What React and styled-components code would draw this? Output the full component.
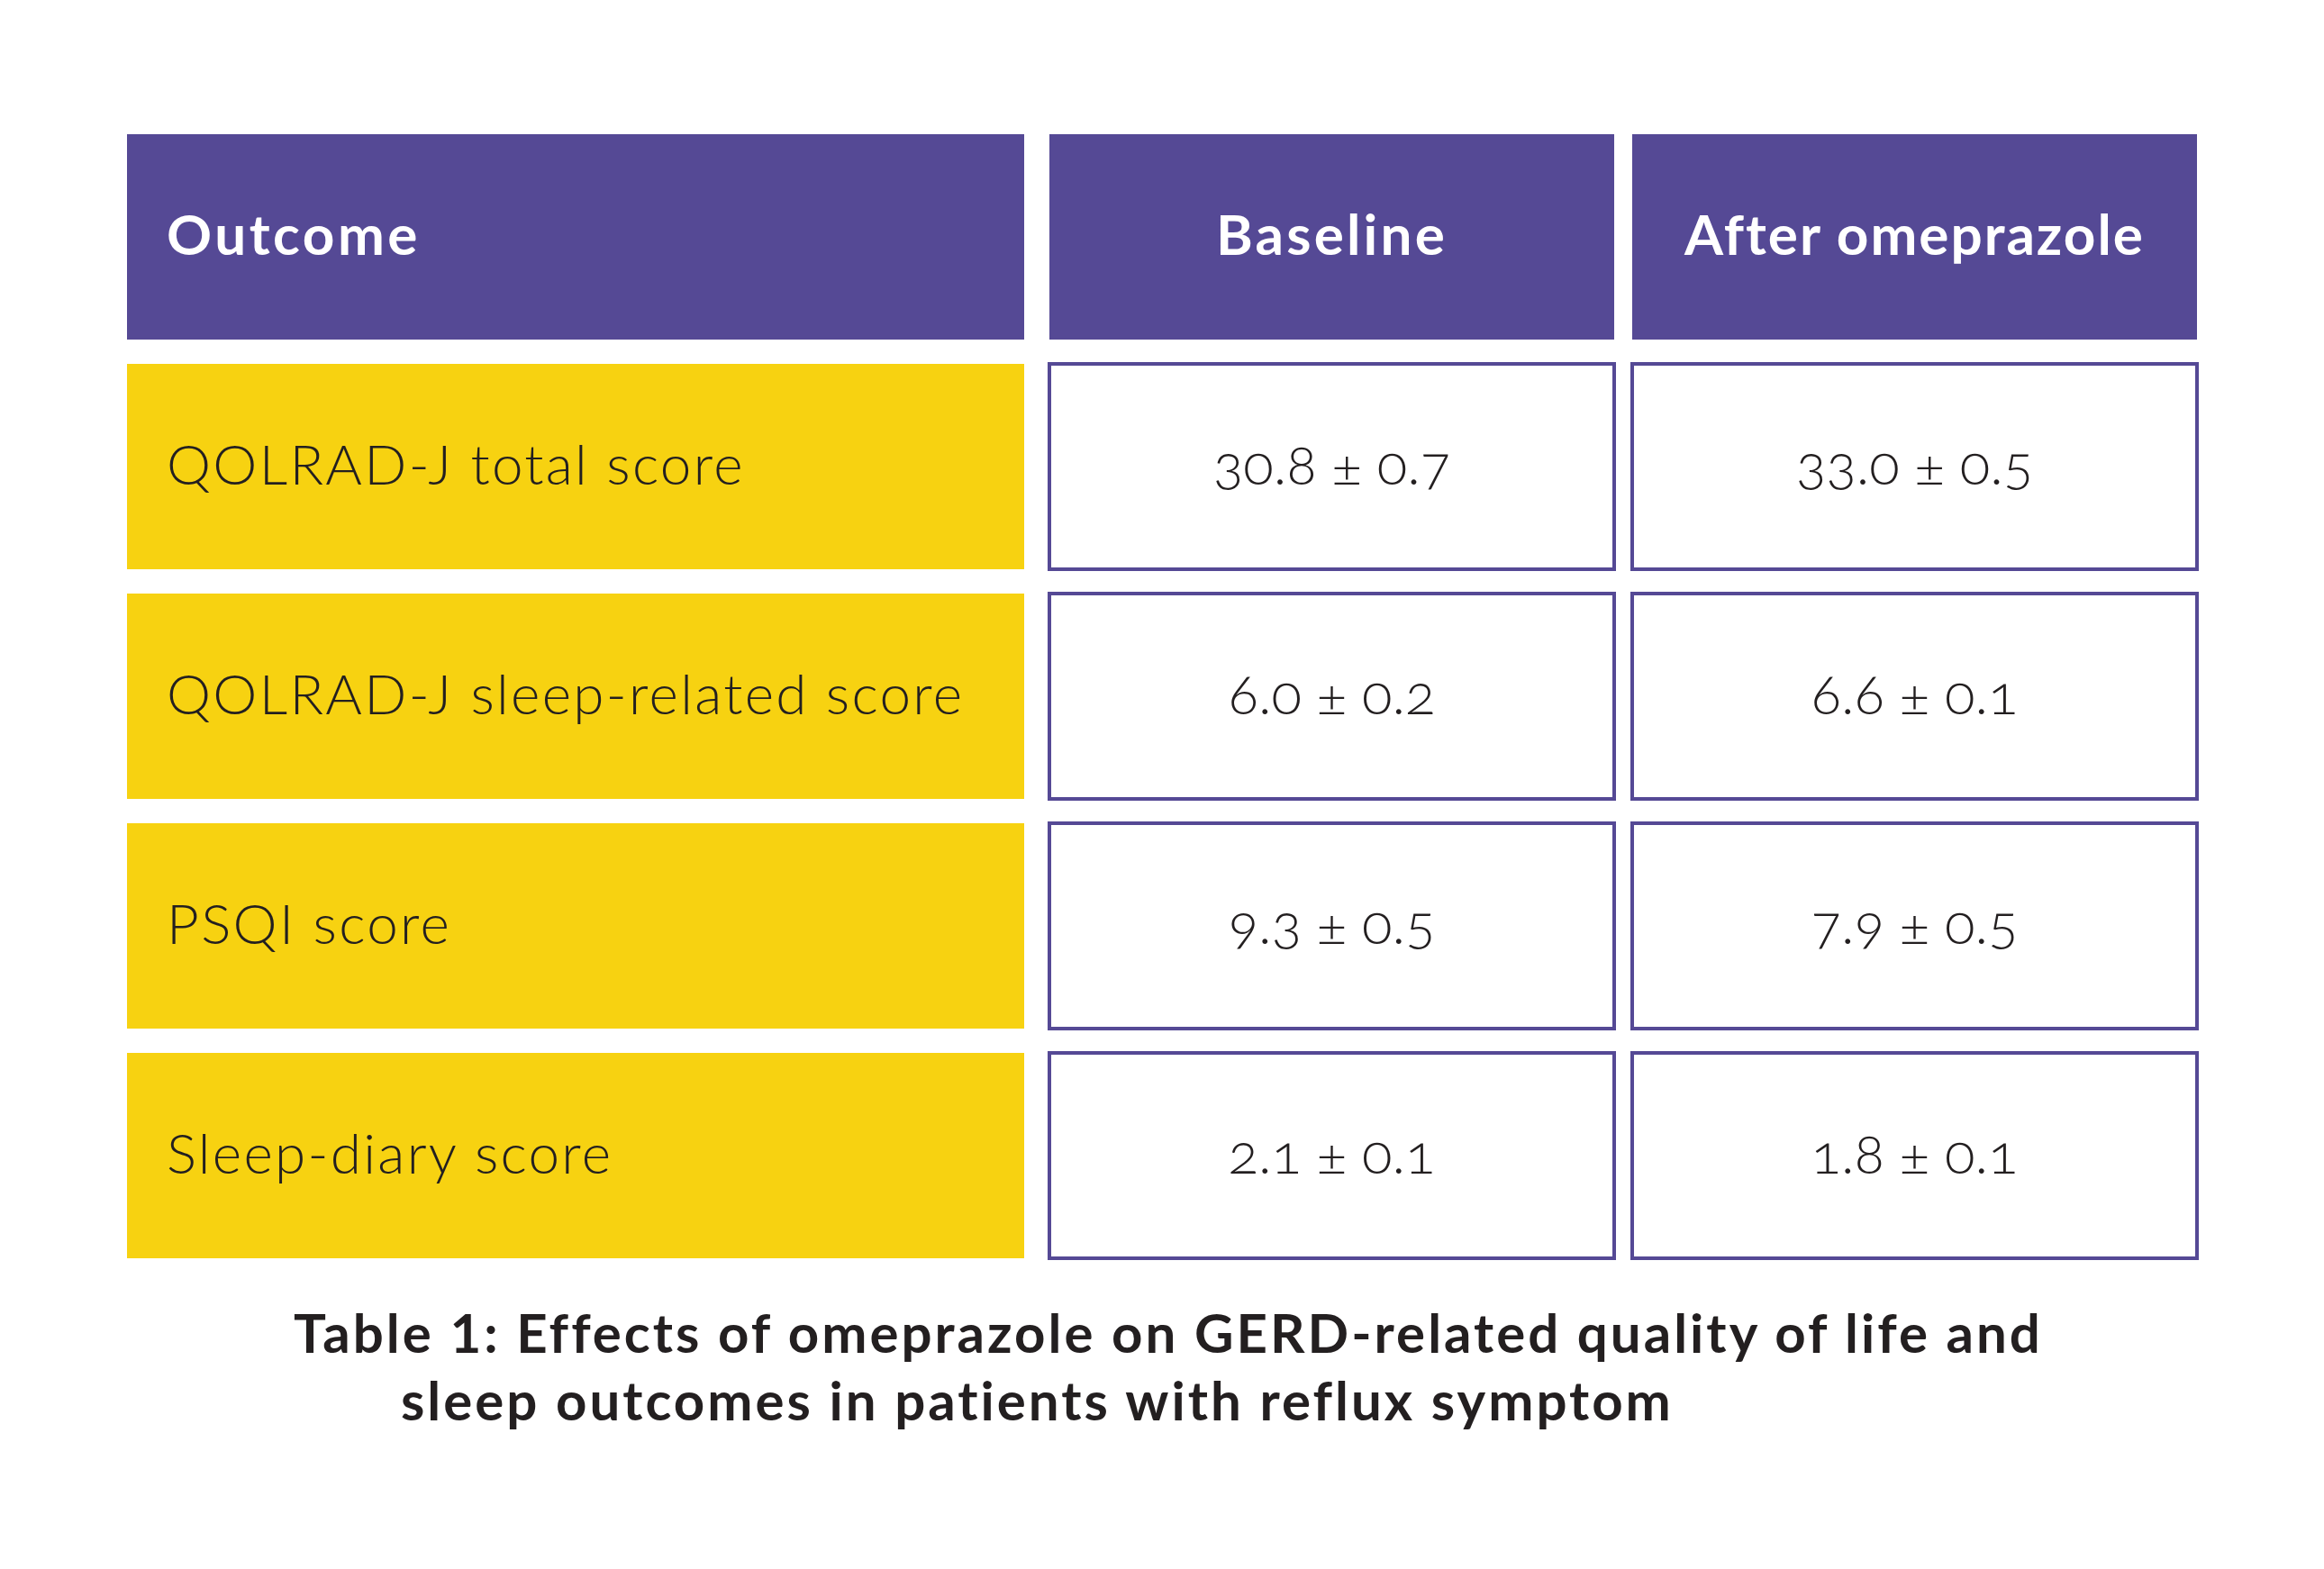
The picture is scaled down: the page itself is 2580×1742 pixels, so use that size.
import React from "react";
import styled, { createGlobalStyle } from "styled-components";

const Global = createGlobalStyle`
  html, body { margin: 0; padding: 0; background: #ffffff; }
  body { font-family: Lato, "Noto Sans", sans-serif; color: #231f20; }
`;

const Page = styled.div`
  width: 2580px;
  height: 1742px;
  box-sizing: border-box;
  padding: 149px 0 0 141px;
  background: #ffffff;
`;

const Table = styled.div`
  display: flex;
  flex-direction: column;
  gap: 27px;
  width: 2298px;
`;

const Row = styled.div`
  display: flex;
  gap: 20px;
  height: 228px;
`;

const Cell = styled.div`
  box-sizing: border-box;
  display: flex;
  align-items: center;
  padding-bottom: 8px;
  font-size: 62px;
  line-height: 1.2;
  white-space: nowrap;
`;

const LabelCell = styled(Cell)`
  width: 996px;
  margin-right: 8px;
  padding-left: 44px;
  justify-content: flex-start;
  background: ${(p) => (p.$head ? "#554995" : "#f7d211")};
  color: ${(p) => (p.$head ? "#ffffff" : "#231f20")};
  font-weight: ${(p) => (p.$head ? 700 : 300)};
  letter-spacing: ${(p) => (p.$head ? "3.5px" : "2.3px")};
`;

const HeadCell = styled(Cell)`
  width: 627px;
  justify-content: center;
  background: #554995;
  color: #ffffff;
  font-weight: 700;
  letter-spacing: ${(p) => p.$spacing}px;
`;

const ValueCell = styled(Cell)`
  width: 627px;
  justify-content: center;
  background: #ffffff;
  outline: 4px solid #554995;
  outline-offset: -2px;
  color: #231f20;
  font-weight: 300;
  font-feature-settings: "onum" 1;
`;

const Caption = styled.div`
  margin-top: 45px;
  font-size: 60px;
  line-height: 75px;
  font-weight: 700;
  letter-spacing: 3px;
  color: #231f20;
  white-space: nowrap;
`;

const CaptionLine = styled.span`
  display: block;
  padding-left: ${(p) => p.$indent}px;
`;

const rows = [
  ["QOLRAD-J total score", "30.8 ± 0.7", "33.0 ± 0.5"],
  ["QOLRAD-J sleep-related score", "6.0 ± 0.2", "6.6 ± 0.1"],
  ["PSQI score", "9.3 ± 0.5", "7.9 ± 0.5"],
  ["Sleep-diary score", "2.1 ± 0.1", "1.8 ± 0.1"],
];

export default function App() {
  return (
    <>
      <Global />
      <Page>
        <Table>
          <Row>
            <LabelCell $head>Outcome</LabelCell>
            <HeadCell $spacing={3.2}>Baseline</HeadCell>
            <HeadCell $spacing={2}>After omeprazole</HeadCell>
          </Row>
          {rows.map(([label, base, after]) => (
            <Row key={label}>
              <LabelCell>{label}</LabelCell>
              <ValueCell>{base}</ValueCell>
              <ValueCell>{after}</ValueCell>
            </Row>
          ))}
        </Table>
        <Caption>
          <CaptionLine $indent={185}>
            Table 1: Effects of omeprazole on GERD-related quality of life and
          </CaptionLine>
          <CaptionLine $indent={304}>
            sleep outcomes in patients with reflux symptom
          </CaptionLine>
        </Caption>
      </Page>
    </>
  );
}
